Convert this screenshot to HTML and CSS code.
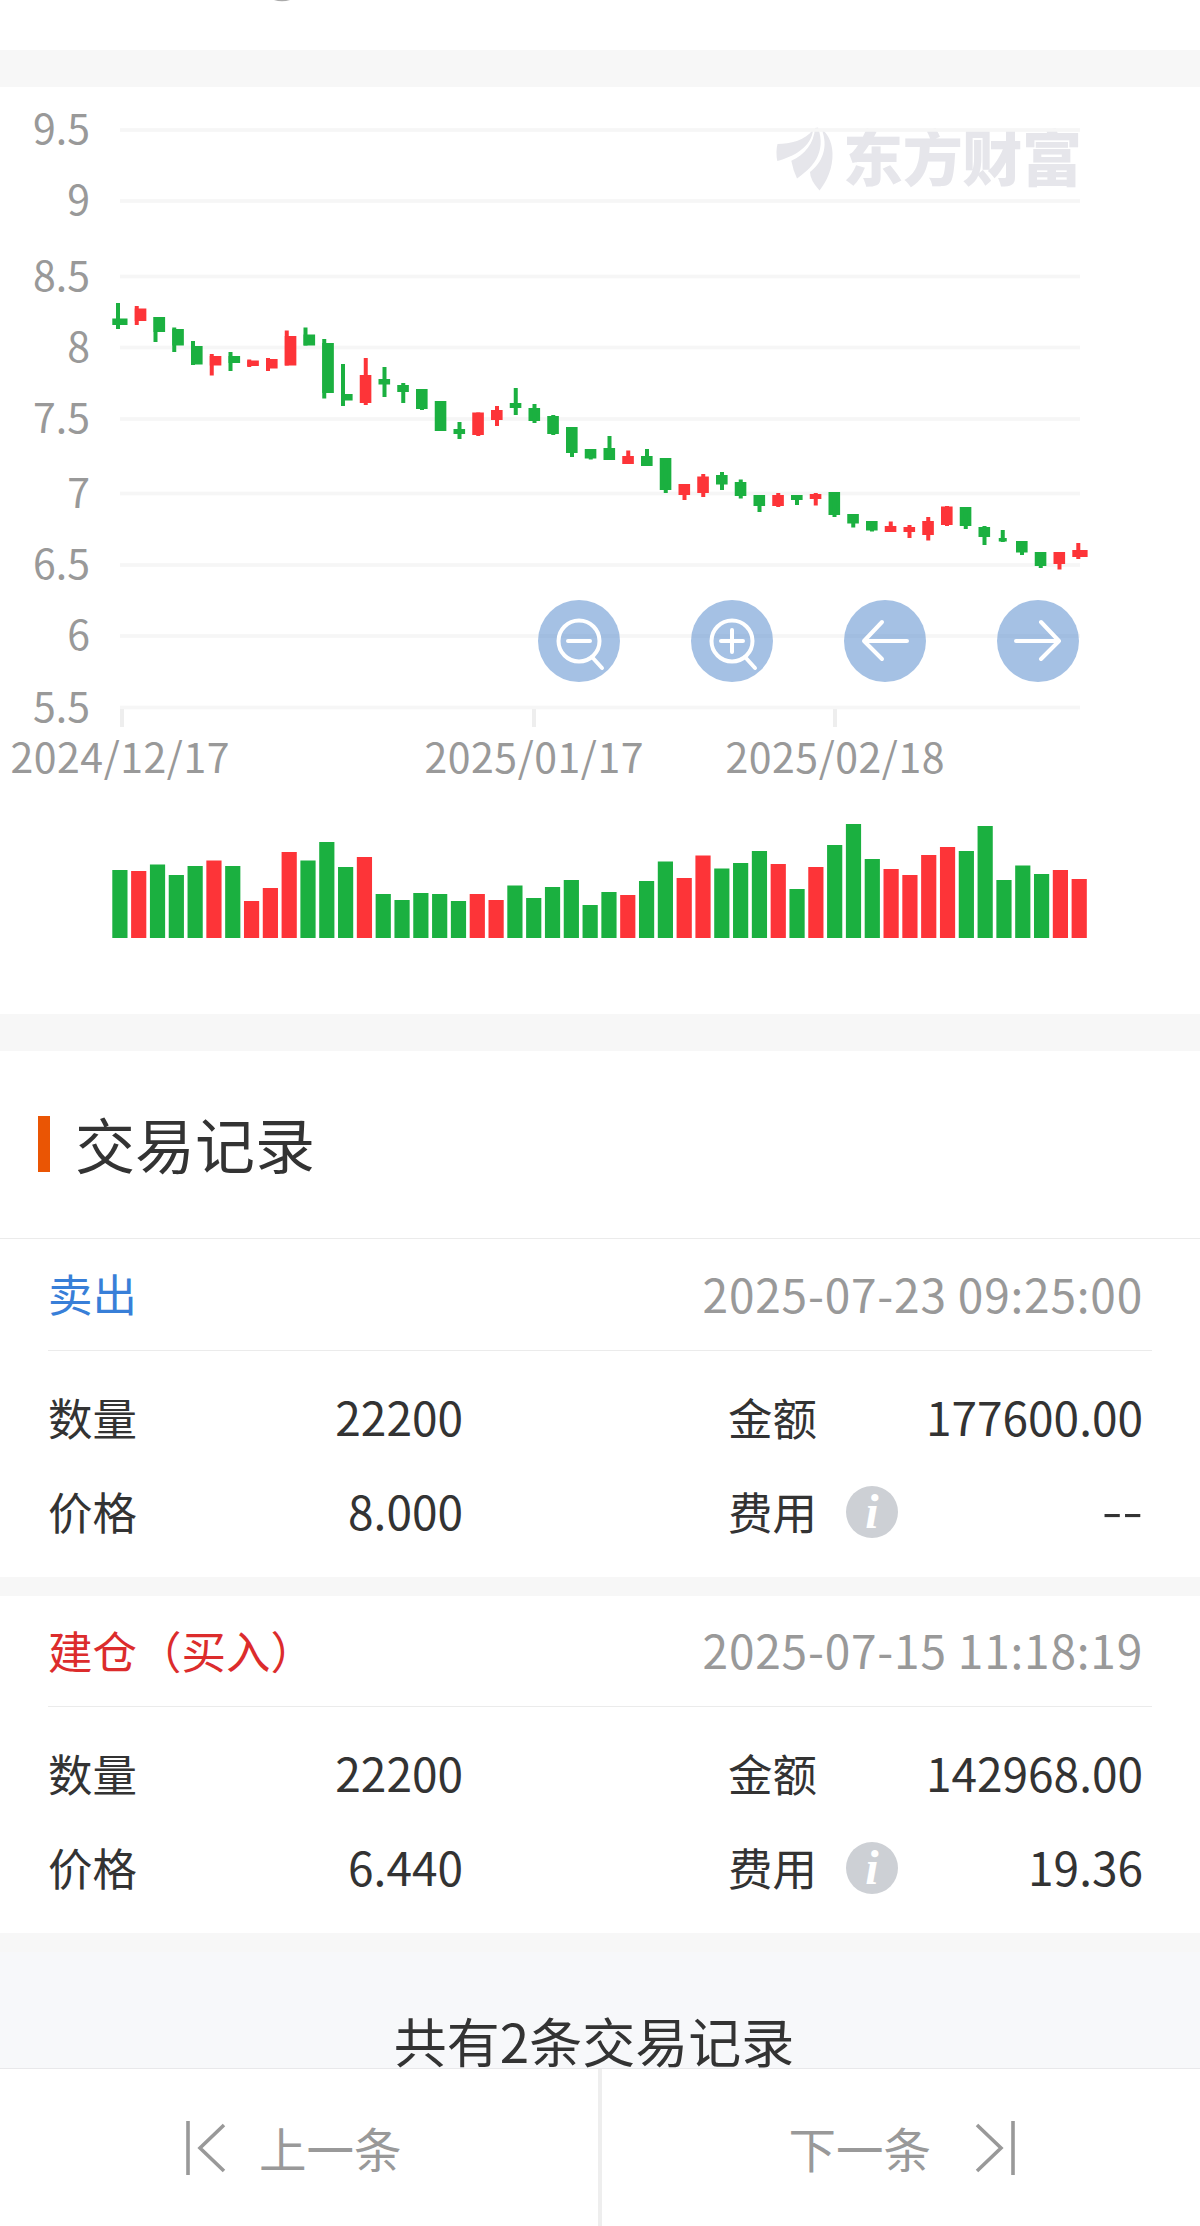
FILE: index.html
```html
<!DOCTYPE html>
<html lang="zh-CN">
<head>
  <meta charset="UTF-8" />
  <meta name="viewport" content="width=device-width, initial-scale=1" />
  <title>交易记录</title>
  <link rel="stylesheet" href="styles.css">
</head>
<body>

  <div class="top">
    <svg class="top-mark" viewBox="0 0 16 2"><path d="M0 0H16Q8 2.4 0 0Z" fill="#aaa"/></svg>
  </div>

  <section class="chart-box">
    <svg class="chart" viewBox="0 87 1200 927">
      <g class="watermark">
        <path d="M813 129.500C805 141 790 143.500 777.500 144Q775.500 152 777.300 161C793 157 812 147 813 129.500Z"/>
        <path d="M815 128C814 143 805 155 791.300 160.800Q793 170 797 178.500C812 168 827 153 818 127.500Z"/>
        <path d="M821.500 129C829 147 822 163 810 172Q810 180 819.500 190.500C827 181 833 168 832.500 153C832 141 827 133 821.500 129Z"/>
        <text x="843" y="181" textLength="239">东方财富</text>
      </g>
      <g id="grid"></g>
      <g id="candles"></g>
      <g id="volume"></g>
      <g class="tools">
        <circle cx="579" cy="641" r="41"/>
        <circle cx="732" cy="641" r="41"/>
        <circle cx="885" cy="641" r="41"/>
        <circle cx="1038" cy="641" r="41"/>
      </g>
      <g class="tool-lines">
        <circle cx="579" cy="641" r="20.500"/>
        <path d="M568 641H590M592 657L602 668"/>
        <circle cx="732" cy="641" r="20.500"/>
        <path d="M721 641H743M732 630V652M745 657L755 668"/>
        <path d="M907 641H864M882 622L864 641L882 659"/>
        <path d="M1016 641H1059M1041 622L1059 641L1041 659"/>
      </g>
    </svg>
  </section>

  <h1 class="title">交易记录</h1>

  <section class="record">
    <div class="record-head">
      <span class="sell">卖出</span>
      <span class="time">2025-07-23 09:25:00</span>
    </div>
    <div class="record-body">
      <div class="cell"><span>数量</span><span class="num">22200</span></div>
      <div class="cell"><span>金额</span><span class="num">177600.00</span></div>
      <div class="cell"><span>价格</span><span class="num">8.000</span></div>
      <div class="cell"><span>费用</span><i class="info">i</i><span class="num dash">--</span></div>
    </div>
  </section>

  <section class="record">
    <div class="record-head">
      <span class="buy">建仓（买入）</span>
      <span class="time">2025-07-15 11:18:19</span>
    </div>
    <div class="record-body">
      <div class="cell"><span>数量</span><span class="num">22200</span></div>
      <div class="cell"><span>金额</span><span class="num">142968.00</span></div>
      <div class="cell"><span>价格</span><span class="num">6.440</span></div>
      <div class="cell"><span>费用</span><i class="info">i</i><span class="num">19.36</span></div>
    </div>
  </section>

  <div class="total">共有2条交易记录</div>

  <nav class="pager">
    <a class="prev">
      <svg width="42" height="54" viewBox="0 0 42 54"><path d="M2 0V54M38 4L14 27L38 50"/></svg>
      上一条
    </a>
    <a class="next">
      下一条
      <svg width="42" height="54" viewBox="0 0 42 54"><path d="M40 0V54M4 4L28 27L4 50"/></svg>
    </a>
  </nav>

<script>
  // [rise, body top, body bottom, high, low, volume top]
  const days = [
    [0,318.5,325,303,329,870],[1,308.5,321,306,325,871],[0,317,332,317,342,864.5],[0,329,345.5,327.5,352,875],
    [0,346,364.5,341,365,866],[1,356,365.5,354,375.5,860.5],[0,356,363,352,371,866],[1,360.5,366,359.5,367,901],
    [1,359,368.5,358,371,888],[1,336,365.5,330.5,365.5,852],[0,334.5,345.5,327.5,345.5,860.5],[0,343,393,339,398.5,842],
    [0,394,400.5,364,406,867],[1,375,403,358,405,857],[0,379,384.5,367,397,894],[0,385,392,383,403,900],
    [0,389,409,389,410,893],[0,401,431,401,431,894],[0,429,434,422,439,901],[1,412.5,435,412.5,436,894],
    [1,410,420,406,426,900],[0,403,408,388,415,885.5],[0,408,421,404,423,898],[0,416,434,415,435,887],
    [0,427,453,427,457,880],[0,449,458.5,449,459.5,905],[0,448,460,436,460,892],[1,456,464,450.5,464,895],
    [0,456,466,449,466,881],[0,458,490,458,493,861.5],[1,484,495,484,500,878],[1,476.5,493,474,497,855.5],
    [0,475,484.5,472,490,868.5],[0,482,496,479.5,498.5,863],[0,495,506,495,512,851],[1,495,506,493,507,864],
    [0,495,500,495,505,889],[1,494,499,493,505.5,867],[0,492,515,492,517,845],[0,514,523.5,514,527.5,824],
    [0,521,530.5,521,531.5,859],[1,526,532,521.5,532,869],[1,527,532,525,538,875],[1,521,535,517,540.5,855],
    [1,506.5,525,506,526,847],[0,507,526,507,529,851],[0,527,537,526,545,826],[0,538,541.5,530,542,880],
    [0,541,552.5,541,555,865.5],[0,552,566,552,568,874],[1,552,564,552,569.5,870],[1,550,557,543,559,879]
  ];
  const step = 18.75;
  const rect = (x, y, w, h, c) => `<rect x="${x}" y="${y}" width="${w}" height="${h}" class="${c}"/>`;

  let candles = "", volume = "";
  days.forEach(([rise, top, bottom, high, low, vol], i) => {
    const c = rise ? "up" : "down";
    let x = 116 + i * step, w = 11.6;
    // the early wicks sit on the left edge of the body
    let wick = i < 13 ? x : x + 4;
    if (i === 0) { x = 112.3; w = 15.2; wick = 116; }
    if (i === 47) { x += 1.5; w = 8; wick = x + 2; }
    if (i === 51) { x = 1072.3; w = 15.3; wick = 1076.3; }
    candles += rect(x, top, w, bottom - top, c) + rect(wick, high, 4, low - high, c);
    volume += rect(112.3 + i * 18.81, vol, 15.2, 938 - vol, c);
  });
  document.getElementById("candles").innerHTML = candles;
  document.getElementById("volume").innerHTML = volume;

  const rows = [["9.5",130],["9",201],["8.5",276.5],["8",347.5],["7.5",419],["7",493.5],["6.5",565],["6",636],["5.5",707.5]];
  const dates = [["2024/12/17",120],["2025/01/17",534],["2025/02/18",835]];
  let grid = "";
  rows.forEach(([t, y]) => {
    grid += rect(120, y - 1.8, 960, 3.6, "line") + `<text x="90" y="${y + 14}" text-anchor="end">${t}</text>`;
  });
  dates.forEach(([t, x]) => {
    grid += rect(x === 120 ? 120 : x - 2, 709, 4, 18, "tick") + `<text x="${x}" y="773" text-anchor="middle" textLength="219">${t}</text>`;
  });
  document.getElementById("grid").innerHTML = grid;
</script>

</body>
</html>
```

FILE: styles.css
```css
* {
  box-sizing: border-box;
}
body {
  margin: 0;
  width: 1200px;
  height: 2226px;
  display: flex;
  flex-direction: column;
  overflow: hidden;
  background: #fff;
  color: #333;
  font-family: "Noto Sans CJK SC", sans-serif;
  font-size: 44.5px;
}
body > * {
  flex-shrink: 0;
}
.top {
  height: 50px;
  padding-left: 274px;
}
.top-mark {
  display: block;
  width: 16px;
  height: 2px;
}
.chart-box {
  height: 1001px;
  border-top: 37px solid #f7f7f7;
  border-bottom: 37px solid #f7f7f7;
}
.chart {
  display: block;
  width: 1200px;
  height: 927px;
}
.chart text {
  font-size: 41px;
  fill: #999;
}
.chart .watermark,
.chart .watermark text {
  fill: #e6e6eb;
}
.chart .watermark text {
  font-size: 60px;
  font-weight: 900;
}
.line { fill: #f6f6f6; }
.tick { fill: #eee; }
.up { fill: #fd3438; }
.down { fill: #1bb040; }
.tools {
  fill: rgba(75, 131, 202, 0.5);
}
.tool-lines {
  fill: none;
  stroke: #fff;
  stroke-width: 4;
  stroke-linecap: round;
  stroke-linejoin: round;
}
.title {
  display: flex;
  align-items: center;
  height: 188px;
  margin: 0;
  padding: 0 0 4px 38px;
  border-bottom: 1px solid #ebebeb;
  font-size: 60px;
  font-weight: 400;
  line-height: 80px;
}
.title::before {
  content: "";
  width: 12px;
  height: 56px;
  margin: 2px 25px 0 0;
  background: #ea5504;
}
.record {
  border-bottom: 19px solid #f7f7f7;
}
.record-head {
  display: flex;
  justify-content: space-between;
  align-items: center;
  height: 112px;
  margin: 0 48px;
  padding: 0 9px 4px 0;
  border-bottom: 1px solid #ebebeb;
}
.record:nth-of-type(3) .record-head {
  height: 111px;
}
.sell { color: #387fd8; }
.buy { color: #dc2c2c; }
.time {
  color: #999;
  font-size: 46px;
  letter-spacing: 0.8px;
}
.record-body {
  display: grid;
  grid-template-columns: 415px 415px;
  grid-auto-rows: 94px;
  column-gap: 265px;
  height: 226px;
  padding: 18px 0 0 48px;
}
.cell {
  display: flex;
  align-items: center;
}
.num {
  margin-left: auto;
  font-size: 46px;
}
.dash {
  padding: 0 0 9px;
  font-size: 62px;
  font-weight: 300;
  line-height: 80px;
}
.info {
  display: flex;
  align-items: center;
  justify-content: center;
  width: 52px;
  height: 52px;
  margin: 4px 0 0 29px;
  border-radius: 50%;
  background: #cdd0d5;
  color: #fff;
  font: italic bold 48px/52px "Liberation Serif", serif;
}
.total {
  flex: 1;
  padding: 64px 0 0;
  background: #f7f8fa;
  font-size: 53px;
  line-height: 48px;
  text-align: center;
  text-indent: -12px;
}
.pager {
  display: flex;
  height: 158px;
  background: #fff;
  border-top: 1px solid #e8e8ea;
  color: #999;
  font-size: 47.500px;
}
.pager a {
  display: flex;
  flex: 1;
  align-items: center;
}
.pager svg {
  fill: none;
  stroke: #999;
  stroke-width: 3.6;
}
.prev {
  gap: 31px;
  padding-left: 186px;
  border-right: 2px solid #eee;
}
.next {
  gap: 42px;
  padding-left: 187px;
  border-left: 2px solid #eee;
}
```
